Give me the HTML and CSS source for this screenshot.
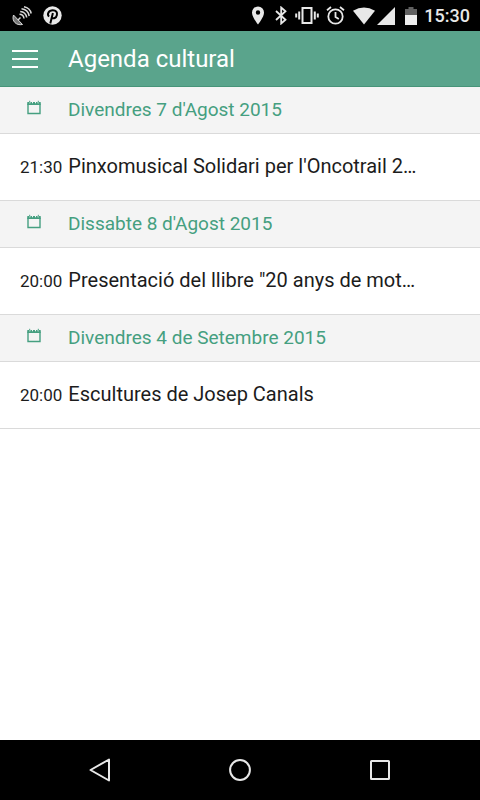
FILE: index.html
```html
<!DOCTYPE html>
<html lang="ca">
<head>
<meta charset="utf-8">
<meta name="viewport" content="width=device-width, initial-scale=1">
<title>Agenda cultural</title>
<link rel="stylesheet" href="styles.css">
</head>
<body>
<svg class="symbols" aria-hidden="true">
  <symbol id="calendar" viewBox="0 0 14 15">
    <path d="M1 3.500V13.500H13V3.500" fill="none" stroke="currentColor" stroke-width="1.400"/>
    <path d="M0.300 2H2V3.200H3.500V2H5V3.200H6V2H8V3.200H9V2H10.500V3.200H12V2H13.700V5H0.300Z" fill="currentColor"/>
    <path d="M2.700 0.800V2.800M11.300 0.800V2.800" stroke="currentColor" stroke-width="1"/>
  </symbol>
</svg>

<div class="status">
  <div class="status-group status-left">
    <svg width="20" height="20" viewBox="0 0 20 20" fill="none" stroke="#d8d8d8" stroke-width="1.500">
      <path d="M1.500 9C-0.500 15 4 19.800 10.500 18.500Z" fill="#777" stroke-width="1"/>
      <path d="M6 14L8.500 11.500"/>
      <path d="M7.500 8.200Q11.500 8.300 12 12.500M8.200 5.500Q13.800 6 14.700 11.500M9.500 2.800Q16 3.500 17.200 10M12 0.800Q18 2 19.200 7.500"/>
    </svg>
    <svg width="19" height="19" viewBox="0 0 19 19">
      <circle cx="9.500" cy="9.500" r="9.200" fill="#e8e8e8"/>
      <path d="M6 10.600C3.700 8.300 5.600 4.300 9.800 4.300C13.200 4.300 14.400 6.500 13.900 9C13.300 12 10.300 13.200 8.800 11.300M9.900 7L7.300 17.500" fill="none" stroke="#000" stroke-width="2"/>
    </svg>
  </div>
  <div class="status-group status-right">
    <svg width="14" height="19" viewBox="0 0 14 19"><path fill="#e8e8e8" fill-rule="evenodd" d="M7 0.500A6 6 0 0 0 1 6.700C1 11 7 18.500 7 18.500S13 11 13 6.700A6 6 0 0 0 7 0.500ZM7 4.300A2.200 2.200 0 1 1 7 8.700A2.200 2.200 0 0 1 7 4.300Z"/></svg>
    <svg class="bluetooth" width="12" height="19" viewBox="0 0 12 19"><path d="M1 5L10.500 13.800L6.200 17.500V1.500L10.500 5.200L1 14" fill="none" stroke="#e8e8e8" stroke-width="1.800"/></svg>
    <svg class="vibrate" width="24" height="19" viewBox="0 0 24 19" fill="none" stroke="#e8e8e8" stroke-width="2"><rect x="7.500" y="2" width="9" height="15"/><path d="M1.200 7.500V11.500M4.200 5.500V13.500M19.800 5.500V13.500M22.800 7.500V11.500"/></svg>
    <svg class="alarm" width="19" height="19" viewBox="0 0 19 19" fill="none" stroke="#e8e8e8" stroke-width="1.800"><circle cx="9.500" cy="10.500" r="7.200"/><path d="M9.500 6V11L12.800 13M1 4.200L5 1M18 4.200L14 1"/></svg>
    <svg class="wifi" width="22" height="18" viewBox="0 0 22 18"><path fill="#e8e8e8" d="M0 3.800Q11-3 22 3.800L11 17.500Z"/></svg>
    <svg class="signal" width="18" height="18" viewBox="0 0 18 18"><path fill="#e8e8e8" d="M18 0V18H0Z"/></svg>
    <svg class="battery" width="12" height="18" viewBox="0 0 12 18"><path fill="#606060" d="M3.500 0H8.500V2H12V8H0V2H3.500Z"/><path fill="#eee" d="M0 8H12V18H0Z"/></svg>
    <span class="clock">15:30</span>
  </div>
</div>

<header class="bar">
  <button class="menu" type="button" aria-label="Menú">
    <svg width="26" height="18" viewBox="0 0 26 18"><path d="M0 1H26M0 9H26M0 17H26" stroke="#fff" stroke-width="2"/></svg>
  </button>
  <h1 class="title">Agenda cultural</h1>
</header>

<main class="agenda">
  <section>
    <h2 class="day"><svg class="day-icon" aria-hidden="true"><use href="#calendar"/></svg>Divendres 7 d'Agost 2015</h2>
    <a class="event" href="#"><time class="time">21:30</time><span class="name">Pinxomusical Solidari per l'Oncotrail 2…</span></a>
  </section>
  <section>
    <h2 class="day"><svg class="day-icon" aria-hidden="true"><use href="#calendar"/></svg>Dissabte 8 d'Agost 2015</h2>
    <a class="event" href="#"><time class="time">20:00</time><span class="name">Presentació del llibre "20 anys de mot…</span></a>
  </section>
  <section>
    <h2 class="day"><svg class="day-icon" aria-hidden="true"><use href="#calendar"/></svg>Divendres 4 de Setembre 2015</h2>
    <a class="event" href="#"><time class="time">20:00</time><span class="name">Escultures de Josep Canals</span></a>
  </section>
</main>

<nav class="system-nav">
  <button type="button" aria-label="Enrere"><svg width="24" height="24" viewBox="0 0 24 24"><path d="M2.500 12L21 1.500V22.500Z"/></svg></button>
  <button type="button" aria-label="Inici"><svg width="24" height="24" viewBox="0 0 24 24"><circle cx="12" cy="12" r="9.900"/></svg></button>
  <button type="button" aria-label="Recents"><svg width="24" height="24" viewBox="0 0 24 24"><rect x="3" y="3" width="18" height="18" rx="0.500"/></svg></button>
</nav>
</body>
</html>
```
FILE: styles.css
```css
* {
  box-sizing: border-box;
}

body {
  margin: 0;
  min-height: 100vh;
  display: flex;
  flex-direction: column;
  background: #fff;
  color: #222;
  font-family: Roboto, sans-serif;
}

button {
  padding: 0;
  border: 0;
  background: none;
}

svg {
  display: block;
  flex: none;
}

.symbols {
  display: none;
}

.status {
  display: flex;
  align-items: center;
  justify-content: space-between;
  padding: 0 10px 0 12px;
  height: 31px;
  background: #000;
}

.status-group {
  display: flex;
  align-items: center;
}

.status-left {
  gap: 11px;
}

.bluetooth {
  margin-left: 10px;
}

.vibrate {
  margin-left: 8px;
}

.alarm {
  margin-left: 7px;
}

.wifi {
  margin-left: 8px;
}

.signal {
  margin-left: 2px;
}

.battery {
  margin-left: 10px;
}

.clock {
  margin-left: 7px;
  color: #e8e8e8;
  font-size: 18px;
  line-height: 30px;
  font-weight: 500;
}

.bar {
  display: flex;
  align-items: center;
  gap: 30px;
  height: 56px;
  padding: 0 12px;
  background: #5aa48c;
  border-bottom: 1px solid #479479;
}

.title {
  margin: 0;
  color: #fff;
  font-size: 24px;
  line-height: 32px;
  font-weight: 400;
}

.agenda {
  flex: 1;
}

.day {
  display: flex;
  align-items: center;
  gap: 27px;
  height: 47px;
  margin: 0;
  padding: 0 27px;
  background: #f4f4f4;
  border-bottom: 1px solid #dadada;
  color: #459f80;
  font-size: 19px;
  line-height: 24px;
  font-weight: 400;
}

.day-icon {
  width: 14px;
  height: 15px;
  margin-bottom: 6px;
}

.event {
  display: flex;
  align-items: baseline;
  gap: 6px;
  height: 67px;
  padding: 18px 20px;
  border-bottom: 1px solid #dadada;
  color: #1c1c1c;
  font-size: 20px;
  line-height: 28px;
  text-decoration: none;
  white-space: nowrap;
}

.time {
  font-size: 17px;
}

.system-nav {
  display: flex;
  justify-content: center;
  gap: 116px;
  padding: 18px 0;
  background: #000;
}

.system-nav svg {
  fill: none;
  stroke: #e8e8e8;
  stroke-width: 2;
  stroke-linejoin: round;
}
```
